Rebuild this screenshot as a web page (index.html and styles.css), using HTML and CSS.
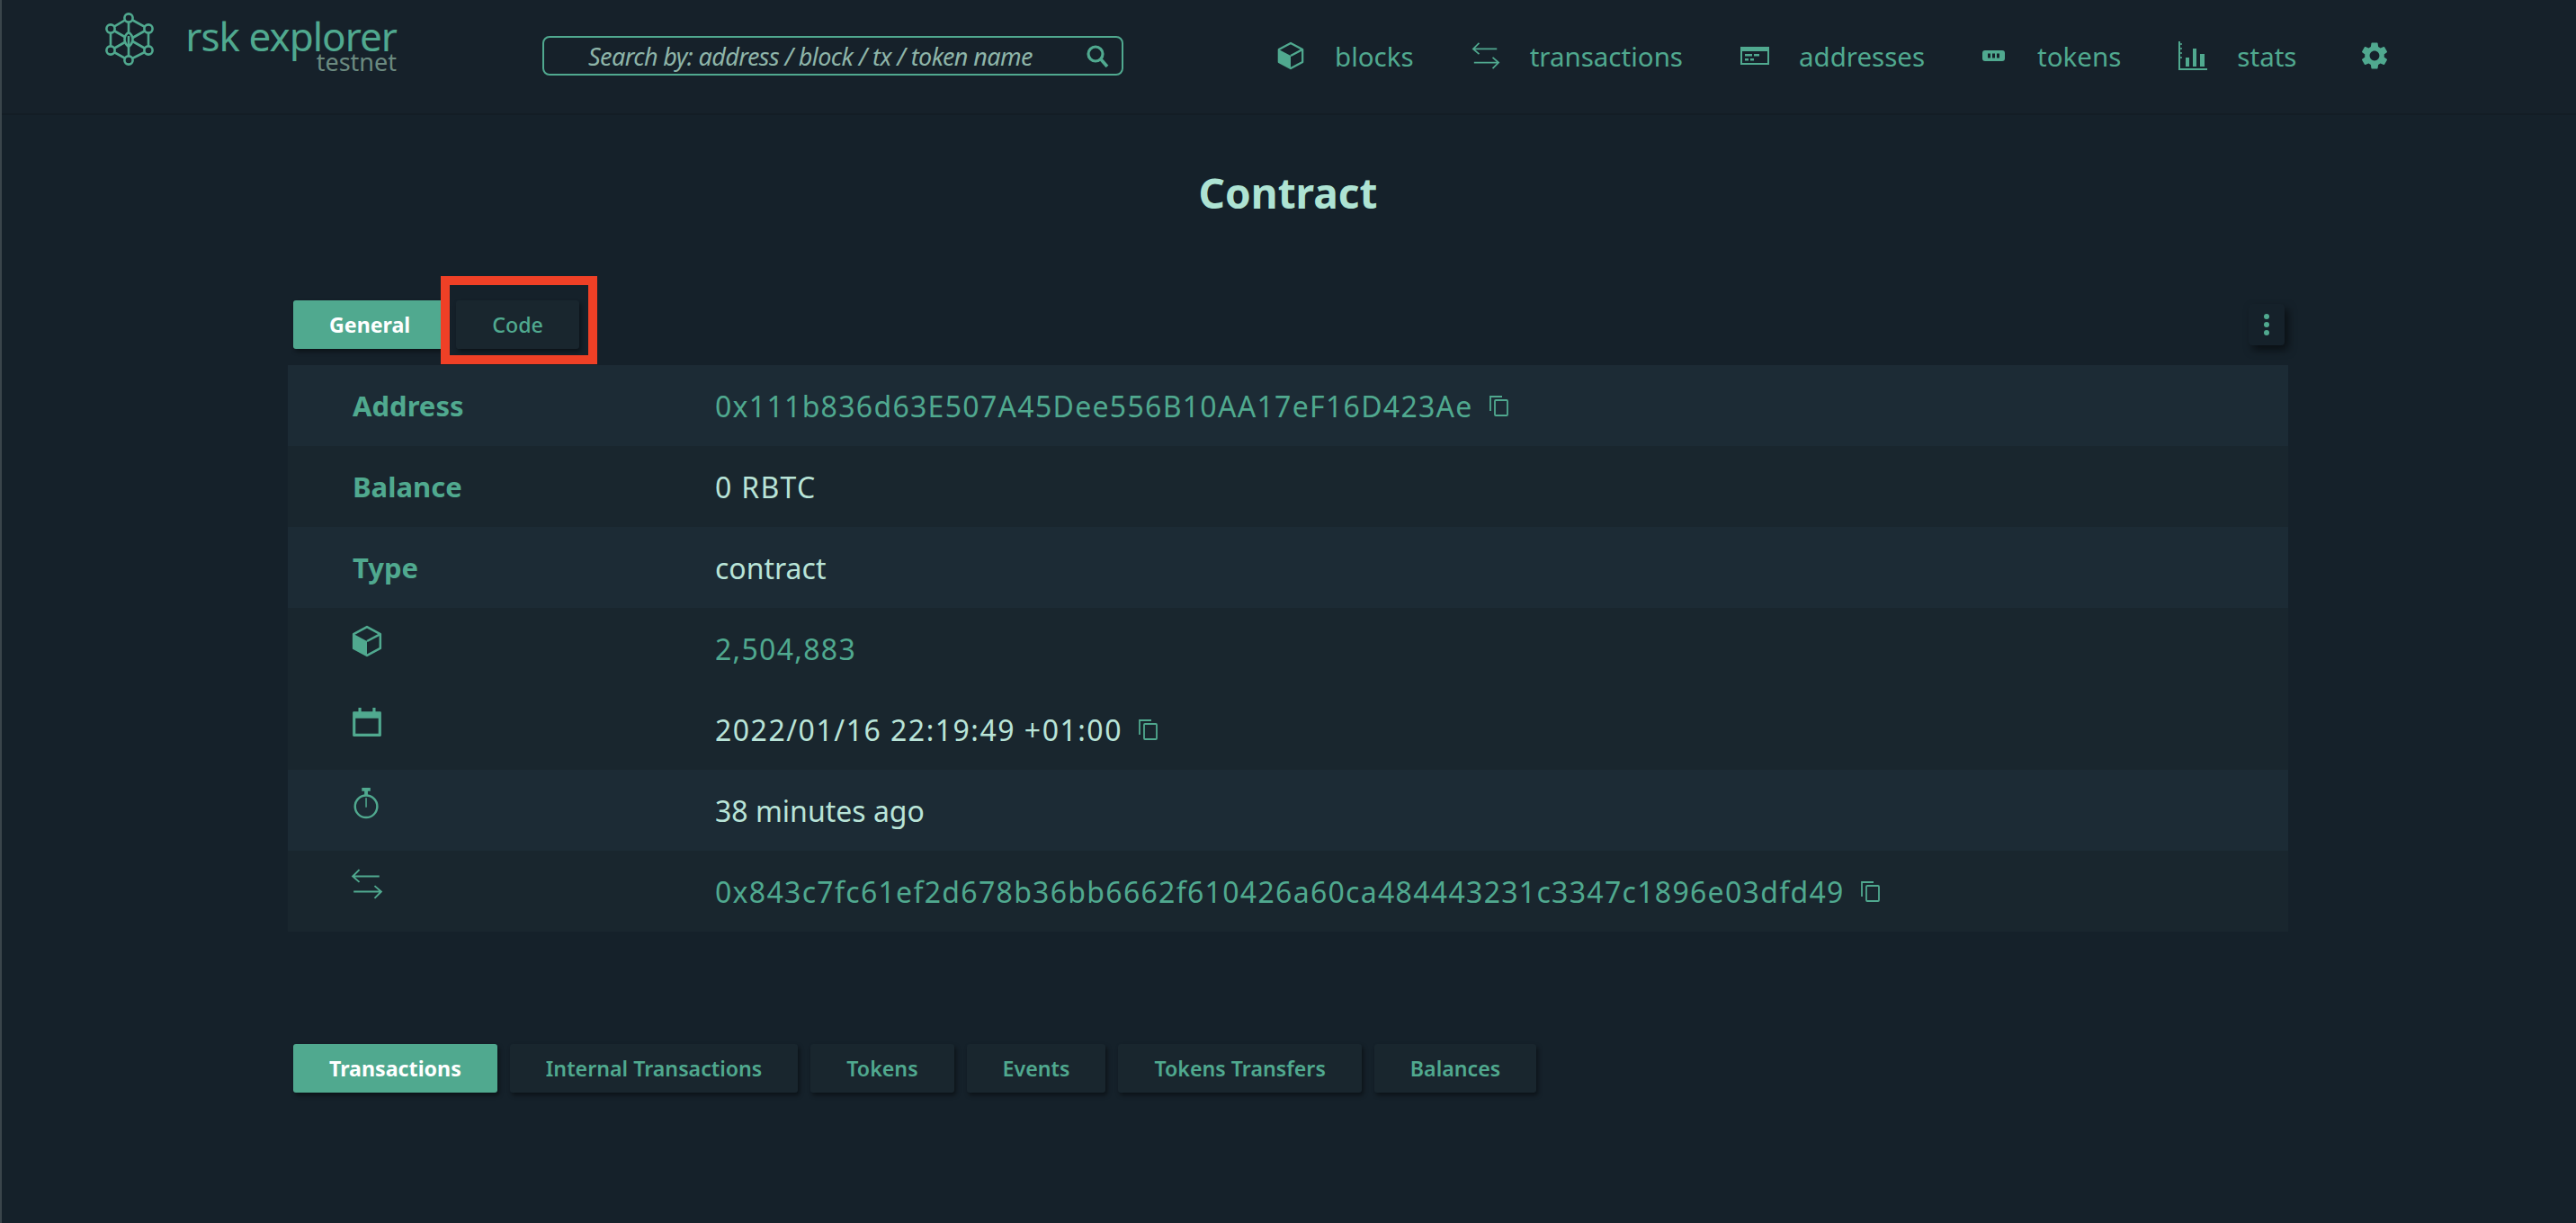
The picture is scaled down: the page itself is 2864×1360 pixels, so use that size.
FILE: index.html
```html
<!DOCTYPE html>
<html lang="en">

<head>
    <meta charset="UTF-8">
    <title>Contract - rsk explorer</title>
    <link rel="stylesheet" href="styles.css">
</head>

<body>
    <svg class="defs" width="0" height="0">
        <symbol id="i-cube" viewBox="0 0 34 34">
            <path d="M17 2 31 9.5V24.5L17 32 3 24.5V9.5Z" fill="none" stroke="currentColor" stroke-width="2.4" stroke-linejoin="round"/>
            <path d="M3 9.5 17 17V32L3 24.5Z" fill="currentColor"/>
            <path d="M17 17 31 9.5" stroke="currentColor" stroke-width="2.4"/>
        </symbol>
        <symbol id="i-swap" viewBox="0 0 34 34">
            <path d="M2 9H30M9 2 2 9 9 15" fill="none" stroke="currentColor" stroke-width="1.8"/>
            <path d="M3 25H32M25 19 32 25 25 32" fill="none" stroke="currentColor" stroke-width="1.8"/>
        </symbol>
        <symbol id="i-calendar" viewBox="0 0 34 34">
            <path d="M3 6H8V2H11V6H23V2H26V6H31A1 1 0 0 1 32 7V31A1 1 0 0 1 31 32H3A1 1 0 0 1 2 31V7A1 1 0 0 1 3 6ZM5 13V29H29V13Z" fill="currentColor"/>
        </symbol>
        <symbol id="i-watch" viewBox="0 0 34 38">
            <circle cx="16" cy="23" r="13" fill="none" stroke="currentColor" stroke-width="2.6"/>
            <path d="M16 13V24" stroke="currentColor" stroke-width="1.6"/>
            <path d="M11 1H21V5H18V10H14V5H11Z" fill="currentColor"/>
        </symbol>
        <symbol id="i-copy" viewBox="0 0 24 24">
            <path d="M2 18V2H15" fill="none" stroke="currentColor" stroke-width="1.8"/>
            <rect x="7" y="6" width="14" height="17" rx="1" fill="none" stroke="currentColor" stroke-width="1.8"/>
        </symbol>
    </svg>

    <header class="topbar">
        <a class="brand">
            <svg class="brand-logo" viewBox="0 0 60 60">
                <g fill="none" stroke="currentColor" stroke-width="2.6">
                    <path d="M30 6 52 18V42L30 53 10 42V18Z"/>
                    <path d="M30 6V53M10 18 52 42M52 18 10 42"/>
                    <path d="M30 22C36 26 36 33 30 38 24 33 24 26 30 22Z" fill="#16212a"/>
                    <path d="M30 26V38"/>
                    <circle cx="30" cy="6" r="4.600" fill="#16212a"/>
                    <circle cx="52" cy="18" r="4.600" fill="#16212a"/>
                    <circle cx="52" cy="42" r="4.600" fill="#16212a"/>
                    <circle cx="30" cy="53" r="4.600" fill="#16212a"/>
                    <circle cx="10" cy="42" r="4.600" fill="#16212a"/>
                    <circle cx="10" cy="18" r="4.600" fill="#16212a"/>
                </g>
            </svg>
            <div class="brand-text">
                <span class="brand-name">rsk explorer</span>
                <span class="brand-net">testnet</span>
            </div>
        </a>

        <div class="search">
            <span class="search-text">Search by: address / block / tx / token name</span>
            <svg class="search-icon" viewBox="0 0 26 26">
                <circle cx="11" cy="11" r="8" fill="none" stroke="currentColor" stroke-width="3.200"/>
                <path d="M17 17 24 25" stroke="currentColor" stroke-width="3.600"/>
            </svg>
        </div>

        <nav class="nav">
            <a class="nav-item"><svg class="nav-icon icon-blocks"><use href="#i-cube"/></svg>blocks</a>
            <a class="nav-item"><svg class="nav-icon icon-swap"><use href="#i-swap"/></svg>transactions</a>
            <a class="nav-item">
                <svg class="nav-icon icon-addr" viewBox="0 0 32 20">
                    <path d="M1 1H31V19H1Z" fill="none" stroke="currentColor" stroke-width="2"/>
                    <path d="M1 1H31V5H1ZM5 8H13V10.500H5ZM15 8H21V10.500H15ZM5 13H9V15.500H5ZM11 13H15V15.500H11Z" fill="currentColor"/>
                </svg>addresses
            </a>
            <a class="nav-item">
                <svg class="nav-icon icon-token" viewBox="0 0 25 12">
                    <path d="M3 0H22A3 3 0 0 1 25 3V9A3 3 0 0 1 22 12H3A3 3 0 0 1 0 9V3A3 3 0 0 1 3 0ZM6 3.500V8.500H9V3.500ZM11 3.500V8.500H14V3.500ZM16 3.500V8.500H19V3.500Z" fill="currentColor" fill-rule="evenodd"/>
                </svg>tokens
            </a>
            <a class="nav-item">
                <svg class="nav-icon icon-stats" viewBox="0 0 32 32">
                    <path d="M1 0V31H32" fill="none" stroke="currentColor" stroke-width="2"/>
                    <path d="M2 3H4M2 8H4M2 13H4M2 18H4" stroke="currentColor" stroke-width="1.500"/>
                    <path d="M8 18H12V28H8ZM16 8H20V28H16ZM24 14H29V28H24Z" fill="currentColor"/>
                </svg>stats
            </a>
            <a class="nav-item gear-item">
                <svg class="nav-icon icon-gear" viewBox="2 2 20 20">
                    <path d="M19.140 12.940c.04-.3.06-.61.06-.94 0-.32-.02-.64-.07-.94l2.030-1.580a.49.49 0 0 0 .12-.61l-1.920-3.320a.488.488 0 0 0-.59-.22l-2.390.96c-.5-.38-1.030-.7-1.620-.94l-.36-2.540a.484.484 0 0 0-.48-.41h-3.840c-.24 0-.43.17-.47.41l-.36 2.540c-.59.24-1.130.57-1.620.94l-2.390-.96c-.22-.08-.47 0-.59.22L2.740 8.870c-.12.21-.08.47.12.61l2.030 1.580c-.05.3-.09.63-.09.94s.02.64.07.94l-2.030 1.580a.49.49 0 0 0-.12.61l1.920 3.320c.12.22.37.29.59.22l2.390-.96c.5.38 1.030.7 1.620.94l.36 2.540c.05.24.24.41.48.41h3.840c.24 0 .44-.17.47-.41l.36-2.540c.59-.24 1.130-.56 1.620-.94l2.390.96c.22.08.47 0 .59-.22l1.920-3.320c.12-.22.07-.47-.12-.61l-2.010-1.580zM12 15.600c-1.980 0-3.600-1.620-3.600-3.600s1.620-3.600 3.600-3.600 3.600 1.620 3.600 3.600-1.620 3.600-3.600 3.600z" fill="currentColor"/>
                </svg>
            </a>
        </nav>
    </header>

    <main class="page">
        <h1 class="title">Contract</h1>

        <div class="tabs-top">
            <div class="tabs">
                <button class="tab active">General</button>
                <button class="tab code-tab">Code<span class="highlight"></span></button>
            </div>
            <button class="more"><span></span><span></span><span></span></button>
        </div>

        <section class="details">
            <div class="row light">
                <div class="label">Address</div>
                <div class="value link num">0x111b836d63E507A45Dee556B10AA17eF16D423Ae<svg class="copy"><use href="#i-copy"/></svg></div>
            </div>
            <div class="row">
                <div class="label">Balance</div>
                <div class="value num">0 RBTC</div>
            </div>
            <div class="row light">
                <div class="label">Type</div>
                <div class="value">contract</div>
            </div>
            <div class="row">
                <div class="label"><svg class="row-icon"><use href="#i-cube"/></svg></div>
                <div class="value link num">2,504,883</div>
            </div>
            <div class="row">
                <div class="label"><svg class="row-icon"><use href="#i-calendar"/></svg></div>
                <div class="value date">2022/01/16 22:19:49 +01:00<svg class="copy"><use href="#i-copy"/></svg></div>
            </div>
            <div class="row light">
                <div class="label"><svg class="row-icon"><use href="#i-watch"/></svg></div>
                <div class="value">38 minutes ago</div>
            </div>
            <div class="row">
                <div class="label"><svg class="row-icon"><use href="#i-swap"/></svg></div>
                <div class="value link num">0x843c7fc61ef2d678b36bb6662f610426a60ca484443231c3347c1896e03dfd49<svg class="copy"><use href="#i-copy"/></svg></div>
            </div>
        </section>

        <div class="tabs tabs-bottom">
            <button class="tab active">Transactions</button>
            <button class="tab">Internal Transactions</button>
            <button class="tab">Tokens</button>
            <button class="tab">Events</button>
            <button class="tab">Tokens Transfers</button>
            <button class="tab">Balances</button>
        </div>
    </main>
</body>

</html>
```

FILE: styles.css
```css
* {
    margin: 0;
    padding: 0;
    box-sizing: border-box;
    font-family: "Noto Sans", "Open Sans", sans-serif;
}

body {
    height: 1360px;
    overflow: hidden;
    background: #15212a;
    border-left: 2px solid #3a454b;
    color: #50a98f;
}

.defs {
    position: absolute;
}

/* top bar */

.topbar {
    display: flex;
    align-items: flex-start;
    height: 128px;
    padding: 14px 0 0 111px;
    background: #16212a;
    border-bottom: 2px solid #131d25;
}

.brand {
    display: flex;
    width: 490px;
}

.brand-logo {
    width: 60px;
    height: 60px;
}

.brand-text {
    display: flex;
    flex-direction: column;
    align-items: flex-end;
    margin-left: 32px;
    width: 236px;
}

.brand-name {
    font-size: 44px;
    line-height: 40px;
    margin-top: 6px;
    letter-spacing: -1px;
    white-space: nowrap;
}

.brand-net {
    font-size: 27px;
    line-height: 20px;
    margin-top: -1px;
    color: #6b8a80;
}

.search {
    display: flex;
    align-items: center;
    justify-content: space-between;
    width: 646px;
    height: 44px;
    margin-top: 26px;
    padding: 0 14px 0 49px;
    border: 2px solid #50a98f;
    border-radius: 8px;
}

.search-text {
    font-size: 27px;
    font-style: italic;
    color: #8eb5a9;
    letter-spacing: -0.6px;
    white-space: nowrap;
}

.search-icon {
    width: 26px;
    height: 26px;
}

.nav {
    display: flex;
    align-items: center;
    margin: 26px 0 0 170px;
    height: 44px;
    font-size: 29.5px;
}

.nav-item {
    display: flex;
    align-items: center;
    margin-right: 64px;
    white-space: nowrap;
}

.gear-item {
    margin-left: 8px;
}

.nav-icon {
    margin-right: 33px;
}

.icon-blocks { width: 32px; height: 32px; }
.icon-swap { width: 32px; height: 32px; }
.icon-addr { width: 32px; height: 20px; }
.icon-token { width: 25px; height: 12px; margin-right: 36px; }
.icon-stats { width: 32px; height: 32px; }
.icon-gear { width: 30px; height: 30px; margin-right: 0; }

/* page */

.page {
    width: 2224px;
    margin-left: 318px;
}

.title {
    height: 70px;
    margin-top: 51px;
    font-size: 46px;
    line-height: 70px;
    font-weight: 700;
    text-align: center;
    color: #aee3d3;
}

.tabs-top {
    display: flex;
    justify-content: space-between;
    align-items: center;
    margin-top: 85px;
    padding: 0 4px 0 6px;
}

.tabs {
    display: flex;
    gap: 14px;
}

.tab {
    position: relative;
    height: 54px;
    padding: 0 40px;
    border: 0;
    border-radius: 3px;
    background: #19262e;
    box-shadow: 2px 3px 5px rgba(0, 0, 0, 0.45);
    color: #50a98f;
    font-size: 23.2px;
    font-weight: 600;
    white-space: nowrap;
}

.tab.active {
    background: #50a98f;
    color: #fff;
    font-weight: 700;
}

.tabs-top .tab.active {
    padding: 0 37px 0 40px;
}

.code-tab {
    font-weight: 500;
}

/* red box from the annotated screenshot */
.highlight {
    position: absolute;
    top: -27px;
    left: -17px;
    right: -20px;
    bottom: -17px;
    border: 10px solid #ef4026;
}

.more {
    display: flex;
    flex-direction: column;
    align-items: center;
    justify-content: center;
    gap: 3px;
    width: 40px;
    height: 46px;
    border: 0;
    border-radius: 4px;
    background: #15212a;
    box-shadow: 4px 5px 10px rgba(0, 0, 0, 0.55);
}

.more span {
    width: 6px;
    height: 6px;
    border-radius: 50%;
    background: #50a98f;
}

.details {
    margin-top: 18px;
}

.row {
    display: flex;
    align-items: center;
    height: 90px;
    background: #19262e;
    font-size: 32px;
}

.row.light {
    background: #1c2b35;
}

.label {
    display: flex;
    width: 475px;
    padding-left: 72px;
    font-size: 31px;
    font-weight: 700;
    color: #50a98f;
}

.value {
    display: flex;
    align-items: center;
    color: #b9e4d8;
}

.value.link {
    color: #50a98f;
}

.value.num {
    letter-spacing: 1.3px;
}

.value.date {
    letter-spacing: 1.5px;
}

.row-icon {
    width: 36px;
    height: 36px;
    margin: -16px 0 0 -2px;
    color: #50a98f;
}

.copy {
    width: 24px;
    height: 24px;
    margin-left: 17px;
    color: #50a98f;
}

.tabs-bottom {
    margin: 125px 0 0 6px;
}
```
